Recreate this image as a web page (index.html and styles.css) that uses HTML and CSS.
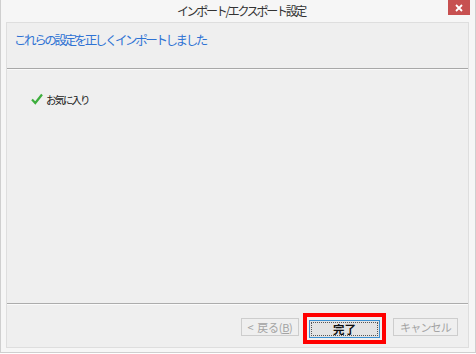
FILE: index.html
```html
<!DOCTYPE html>
<html lang="ja">
<head>
<meta charset="utf-8">
<link rel="stylesheet" href="styles.css">
</head>
<body>
<div class="window">
  <div class="titlebar">
    <div class="title">インポート/エクスポート設定</div>
    <div class="close">
      <svg width="10" height="10" viewBox="0 0 10 10"><path d="M2 2L8 8M8 2L2 8" stroke="#fff" stroke-width="1.8" fill="none"/></svg>
    </div>
  </div>
  <div class="panel">
    <div class="header">これらの設定を正しくインポートしました</div>
    <div class="sep"></div>
    <div class="content">
      <div class="item">
        <svg class="check" width="12" height="12" viewBox="0 0 12 12"><path d="M1 6.5L4.3 10L11 1.5" stroke="#3dae3d" stroke-width="2.2" fill="none" stroke-linejoin="miter"/></svg>
        <span class="label">お気に入り</span>
      </div>
    </div>
    <div class="sep2"></div>
    <div class="footer">
      <div class="btn disabled back"><span class="lt">&lt;</span>戻る(<u>B</u>)</div>
      <div class="redbox"><div class="btn primary"><span class="focus">完了</span></div></div>
      <div class="btn disabled cancel">キャンセル</div>
    </div>
  </div>
</div>
</body>
</html>
```
FILE: styles.css
```css
* { box-sizing: border-box; }
html, body { margin: 0; padding: 0; }
body {
  width: 476px; height: 354px; background: #ffffff;
  font-family: "Noto Sans CJK JP", "Noto Sans", sans-serif;
}
.window {
  width: 476px; height: 353px;
  background: #f6f6f6;
  border: 1px solid #cfcfcf;
  border-top: none;
  display: flex; flex-direction: column;
}
.titlebar {
  height: 22px; position: relative;
  display: flex; justify-content: center; align-items: center;
}
.title {
  font-size: 12px; letter-spacing: -2.3px; color: #333;
  line-height: 22px; padding-left: 6px;
}
.close {
  position: absolute; right: 5px; top: 0;
  width: 22px; height: 15px; background: #c75050;
  display: flex; align-items: center; justify-content: center;
}
.panel {
  margin-left: 5px; width: 463px; height: 326px;
  background: #efefef;
  border: 1px solid #dedede;
  display: flex; flex-direction: column;
}
.header {
  height: 45px; padding-left: 7px; padding-top: 7px;
  font-size: 12.5px; letter-spacing: -2.4px; color: #2f73d4;
  line-height: 20px;
}
.sep { height: 2px; background: #a8a8a8; border-bottom: 1px solid #fafafa; }
.content { height: 233px; padding-top: 22px; padding-left: 24px; }
.item { display: flex; align-items: center; height: 14px; }
.check { margin-right: 3px; }
.label { font-size: 10.5px; letter-spacing: -2px; color: #222; }
.sep2 { height: 2px; background: #acacac; border-bottom: 1px solid #fafafa; }
.footer {
  flex: 1; display: flex; align-items: flex-start; justify-content: flex-end;
  padding-top: 8px; padding-right: 10px;
}
.btn {
  height: 18px; display: flex; align-items: center; justify-content: center;
  font-size: 11px; letter-spacing: -0.8px;
}
.disabled { border: 1px solid #cdcdcd; color: #a3a3a3; background: #efefef; }
.back { width: 58px; margin-top: 5px; letter-spacing: -0.3px; }
.lt { margin-right: 4px; }
.cancel { width: 65px; margin-top: 5px; margin-left: 7px; }
.redbox {
  width: 83px; height: 31px; border: 4px solid #ff0000; margin-left: 4px;
  display: flex; align-items: center; justify-content: center;
}
.primary {
  width: 71px; border: 1px solid #3c8fd0; background: #e3e3e3;
  color: #111; font-weight: bold; padding: 1px; font-size: 11.5px; letter-spacing: 0;
}
.focus {
  width: 100%; height: 100%; border: 1px dotted #555;
  display: flex; align-items: center; justify-content: center;
}
u { text-decoration: underline; }
```
